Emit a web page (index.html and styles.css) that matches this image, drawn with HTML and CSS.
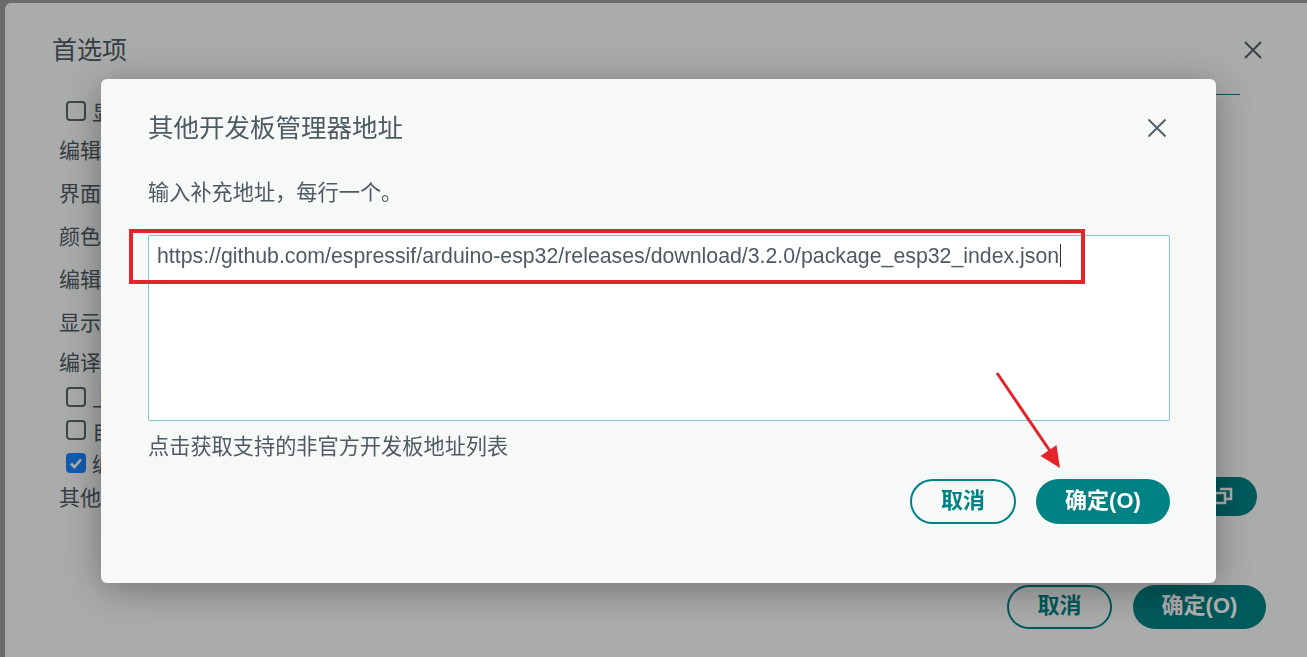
FILE: index.html
```html
<!DOCTYPE html>
<html lang="zh-CN">
<head>
  <meta charset="UTF-8">
  <meta name="viewport" content="width=device-width, initial-scale=1.0">
  <title>首选项</title>
  <link rel="stylesheet" href="styles.css">
</head>
<body>

  <div class="prefs">
    <div class="prefs-head">
      <h2 class="prefs-title">首选项</h2>
      <span class="close">
        <svg width="20" height="20" viewBox="0 0 20 20"><path d="M2 2 L18 18 M18 2 L2 18" stroke="#4e5b61" stroke-width="1.8" fill="none"/></svg>
      </span>
    </div>
    <div class="tab-line"></div>

    <div class="pref-list">
      <div class="row row-first"><span class="box"></span>显示项目文件夹内的文件</div>
      <div class="row">编辑器字体大小：</div>
      <div class="row">界面缩放：</div>
      <div class="row">颜色主题：</div>
      <div class="row">编辑器语言：</div>
      <div class="row">显示详细输出：</div>
      <div class="row row-last">编译器警告</div>
      <div class="row row-check"><span class="box"></span>上传后验证代码</div>
      <div class="row row-check"><span class="box"></span>自动保存</div>
      <div class="row row-check"><span class="box checked">
        <svg width="14" height="14" viewBox="0 0 14 14"><path d="M2 7.5 L5.5 11 L12 3.5" stroke="#fff" stroke-width="2.6" fill="none"/></svg>
      </span>编辑器快速建议</div>
      <div class="row row-urls">
        <span>其他开发板管理器地址：</span>
        <span class="url-input"></span>
        <button class="icon-btn">
          <svg width="20" height="18" viewBox="0 0 20 18"><path d="M2 6 H12 V16 H2 Z M7 2 H18 V12 H12" stroke="#fff" stroke-width="2.6" fill="none"/></svg>
        </button>
      </div>
    </div>

    <div class="prefs-foot">
      <button class="btn btn-outline">取消</button>
      <button class="btn btn-fill">确定(O)</button>
    </div>
  </div>

  <div class="overlay">
    <div class="dialog">
      <div class="dialog-head">
        <h3 class="dialog-title">其他开发板管理器地址</h3>
        <span class="close">
          <svg width="26" height="26" viewBox="0 0 26 26"><path d="M4.5 4.5 L21.5 21.5 M21.5 4.5 L4.5 21.5" stroke="#4e5b61" stroke-width="1.8" fill="none"/></svg>
        </span>
      </div>

      <p class="hint">输入补充地址，每行一个。</p>

      <div class="url-box">https://github.com/espressif/arduino-esp32/releases/download/3.2.0/package_esp32_index.json<span class="caret"></span></div>

      <p class="hint link">点击获取支持的非官方开发板地址列表</p>

      <div class="dialog-foot">
        <button class="btn btn-outline">取消</button>
        <button class="btn btn-fill">确定(O)</button>
      </div>

      <!-- annotation drawn over the screenshot -->
      <svg class="marks" viewBox="0 0 1115 504">
        <rect x="30" y="152" width="952" height="51" fill="none" stroke="#e3242b" stroke-width="4"/>
        <path d="M896 294 L949 372" stroke="#e3242b" stroke-width="3" fill="none"/>
        <path d="M959 389 L939.5 377 L955.5 366 Z" fill="#e3242b"/>
      </svg>
    </div>
  </div>

</body>
</html>
```

FILE: styles.css
```css
body {
  margin: 0;
  height: 100vh;
  overflow: hidden;
  background: #9c9c9c;
  font-family: 'Liberation Sans', 'Noto Sans CJK SC', sans-serif;
  color: #4e5b61;
}

/* background preferences dialog */
.prefs {
  margin: 3px 0 0 5px;
  height: calc(100vh - 3px);
  background: #f7f9f9;
  border-radius: 6px 0 0 0;
  display: flex;
  flex-direction: column;
}

.prefs-head {
  height: 90px;
  padding: 4px 44px 0 47px;
  box-sizing: border-box;
  display: flex;
  align-items: center;
  justify-content: space-between;
}

.prefs-title {
  margin: 0;
  font-size: 25px;
  font-weight: normal;
  line-height: 30px;
}

.close {
  display: flex;
}

.tab-line {
  width: 400px;
  height: 1px;
  margin: 1px 67px 0 auto;
  background: #008184;
}

.pref-list {
  padding: 0 50px 0 54px;
  font-size: 21px;
}

.row {
  display: flex;
  align-items: center;
  height: 43px;
}

.row-first {
  height: 32px;
}

.row-last {
  height: 38px;
}

.row-check {
  height: 33px;
}

.row-urls {
  height: 34px;
}

.box {
  width: 20px;
  height: 20px;
  box-sizing: border-box;
  border: 2px solid #5c666b;
  border-radius: 4px;
  margin: 0 6px 0 7px;
  display: flex;
  align-items: center;
  justify-content: center;
}

.box.checked {
  background: #1a86ff;
  border-color: #1a86ff;
}

.url-input {
  flex: 1;
  height: 34px;
  margin: 0 12px;
  background: #fff;
  border: 1px solid #c8d2d4;
}

.icon-btn {
  width: 68px;
  height: 39px;
  border: none;
  border-radius: 20px;
  background: #008184;
  display: flex;
  align-items: center;
  justify-content: center;
  padding: 0;
}

.prefs-foot {
  margin-top: auto;
  padding: 0 41px 28px 0;
  display: flex;
  justify-content: flex-end;
  gap: 21px;
}

.prefs-foot .btn-outline {
  width: 105px;
  height: 44px;
}

.prefs-foot .btn-fill {
  width: 133px;
  height: 44px;
}

/* buttons */
.btn {
  font-family: 'Liberation Sans', 'Noto Sans CJK SC', sans-serif;
  font-size: 22px;
  font-weight: bold;
  line-height: 1;
  border-radius: 24px;
  padding: 0 0 2px;
  cursor: pointer;
}

.btn-outline {
  background: transparent;
  border: 2.5px solid #008184;
  color: #008184;
}

.btn-fill {
  background: #008184;
  border: none;
  color: #fff;
}

/* modal on top */
.overlay {
  position: fixed;
  top: 0;
  left: 0;
  right: 0;
  bottom: 0;
  background: rgba(0, 0, 0, 0.31);
  padding: 79px 0 0 101px;
}

.dialog {
  position: relative;
  width: 1115px;
  height: 504px;
  box-sizing: border-box;
  padding: 34px 46px 0 47px;
  background: #f7f9f9;
  border-radius: 6px;
  box-shadow: 0 6px 40px rgba(0, 0, 0, 0.35);
}

.dialog-head {
  height: 30px;
  display: flex;
  align-items: center;
  justify-content: space-between;
}

.dialog-title {
  margin: 0;
  font-size: 25.5px;
  font-weight: normal;
  line-height: 30px;
}

.hint {
  margin: 36px 0 0;
  font-size: 21.2px;
  line-height: 28px;
}

.url-box {
  margin-top: 28px;
  height: 186px;
  box-sizing: border-box;
  padding: 8px 8px;
  background: #fff;
  border: 1px solid #82c6c8;
  border-radius: 2px;
  font-size: 21.3px;
  line-height: 24px;
  white-space: nowrap;
}

.caret {
  display: inline-block;
  width: 1px;
  height: 23px;
  margin-left: 1px;
  background: #333;
  vertical-align: -4px;
}

.hint.link {
  margin-top: 12px;
}

.dialog-foot {
  margin-top: 18px;
  display: flex;
  justify-content: flex-end;
  gap: 20px;
}

.dialog-foot .btn-outline {
  width: 106px;
  height: 45px;
}

.dialog-foot .btn-fill {
  width: 134px;
  height: 45px;
}

.marks {
  position: absolute;
  top: 0;
  left: 0;
  width: 100%;
  height: 100%;
  pointer-events: none;
}
```
